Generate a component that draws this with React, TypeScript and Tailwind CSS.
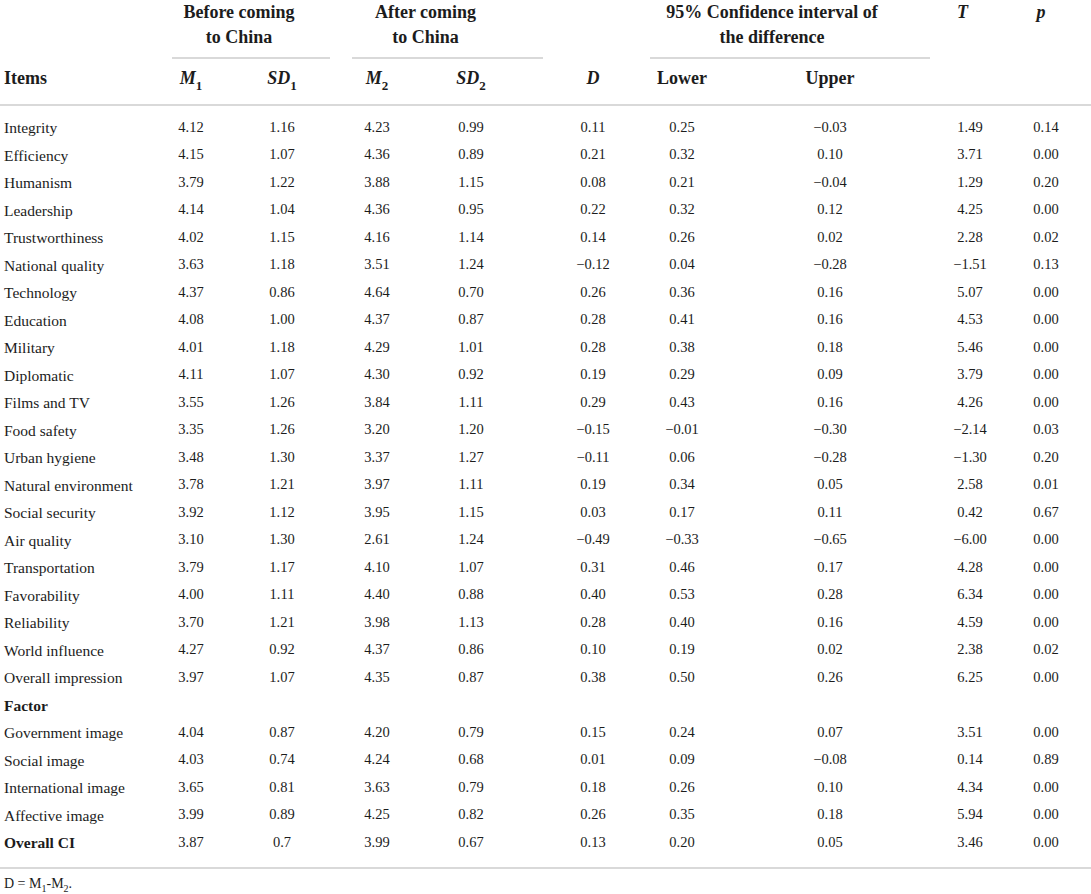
import React from 'react';

type Row = {
  item: string;
  values?: string[];
  bold?: boolean;
};

const rows: Row[] = [
  { item: 'Integrity', values: ['4.12', '1.16', '4.23', '0.99', '0.11', '0.25', '−0.03', '1.49', '0.14'] },
  { item: 'Efficiency', values: ['4.15', '1.07', '4.36', '0.89', '0.21', '0.32', '0.10', '3.71', '0.00'] },
  { item: 'Humanism', values: ['3.79', '1.22', '3.88', '1.15', '0.08', '0.21', '−0.04', '1.29', '0.20'] },
  { item: 'Leadership', values: ['4.14', '1.04', '4.36', '0.95', '0.22', '0.32', '0.12', '4.25', '0.00'] },
  { item: 'Trustworthiness', values: ['4.02', '1.15', '4.16', '1.14', '0.14', '0.26', '0.02', '2.28', '0.02'] },
  { item: 'National quality', values: ['3.63', '1.18', '3.51', '1.24', '−0.12', '0.04', '−0.28', '−1.51', '0.13'] },
  { item: 'Technology', values: ['4.37', '0.86', '4.64', '0.70', '0.26', '0.36', '0.16', '5.07', '0.00'] },
  { item: 'Education', values: ['4.08', '1.00', '4.37', '0.87', '0.28', '0.41', '0.16', '4.53', '0.00'] },
  { item: 'Military', values: ['4.01', '1.18', '4.29', '1.01', '0.28', '0.38', '0.18', '5.46', '0.00'] },
  { item: 'Diplomatic', values: ['4.11', '1.07', '4.30', '0.92', '0.19', '0.29', '0.09', '3.79', '0.00'] },
  { item: 'Films and TV', values: ['3.55', '1.26', '3.84', '1.11', '0.29', '0.43', '0.16', '4.26', '0.00'] },
  { item: 'Food safety', values: ['3.35', '1.26', '3.20', '1.20', '−0.15', '−0.01', '−0.30', '−2.14', '0.03'] },
  { item: 'Urban hygiene', values: ['3.48', '1.30', '3.37', '1.27', '−0.11', '0.06', '−0.28', '−1.30', '0.20'] },
  { item: 'Natural environment', values: ['3.78', '1.21', '3.97', '1.11', '0.19', '0.34', '0.05', '2.58', '0.01'] },
  { item: 'Social security', values: ['3.92', '1.12', '3.95', '1.15', '0.03', '0.17', '0.11', '0.42', '0.67'] },
  { item: 'Air quality', values: ['3.10', '1.30', '2.61', '1.24', '−0.49', '−0.33', '−0.65', '−6.00', '0.00'] },
  { item: 'Transportation', values: ['3.79', '1.17', '4.10', '1.07', '0.31', '0.46', '0.17', '4.28', '0.00'] },
  { item: 'Favorability', values: ['4.00', '1.11', '4.40', '0.88', '0.40', '0.53', '0.28', '6.34', '0.00'] },
  { item: 'Reliability', values: ['3.70', '1.21', '3.98', '1.13', '0.28', '0.40', '0.16', '4.59', '0.00'] },
  { item: 'World influence', values: ['4.27', '0.92', '4.37', '0.86', '0.10', '0.19', '0.02', '2.38', '0.02'] },
  { item: 'Overall impression', values: ['3.97', '1.07', '4.35', '0.87', '0.38', '0.50', '0.26', '6.25', '0.00'] },
  { item: 'Factor', bold: true },
  { item: 'Government image', values: ['4.04', '0.87', '4.20', '0.79', '0.15', '0.24', '0.07', '3.51', '0.00'] },
  { item: 'Social image', values: ['4.03', '0.74', '4.24', '0.68', '0.01', '0.09', '−0.08', '0.14', '0.89'] },
  { item: 'International image', values: ['3.65', '0.81', '3.63', '0.79', '0.18', '0.26', '0.10', '4.34', '0.00'] },
  { item: 'Affective image', values: ['3.99', '0.89', '4.25', '0.82', '0.26', '0.35', '0.18', '5.94', '0.00'] },
  { item: 'Overall CI', bold: true, values: ['3.87', '0.7', '3.99', '0.67', '0.13', '0.20', '0.05', '3.46', '0.00'] },
];

// column tracks, padding nudges each column onto its value centre
const cols = [
  'w-[150px] pl-[4px] text-left',
  'w-[87px] pr-[5px] text-center',
  'w-[93px] pr-[3px] text-center',
  'w-[94px] text-center',
  'w-[108px] pr-[14px] text-center',
  'w-[106px] pl-[16px] text-center',
  'w-[118px] pr-[30px] text-center',
  'w-[144px] pl-[4px] text-center',
  'w-[108px] pl-[32px] text-center',
  'w-[83px] pr-[7px] text-center',
];

function Sym({ base, sub }: { base: string; sub?: string }) {
  return (
    <span className="italic font-bold">
      {base}
      {sub && <sub className="not-italic font-semibold text-[13px] align-[-3px] leading-none">{sub}</sub>}
    </span>
  );
}

export default function App() {
  return (
    <div className="w-[1091px] h-[894px] bg-white text-[#1c1c1c] font-['Liberation_Serif',serif] overflow-hidden">
      {/* group headings */}
      <div className="flex text-[18px] font-bold leading-[25px]">
        <div className="ml-[172px] w-[158px] flex flex-col">
          <div className="pr-[24px] text-center">
            Before coming
            <br />
            to China
          </div>
          <div className="mt-[7px] h-[2px] bg-[#d9d9d9]" />
        </div>
        <div className="ml-[22px] w-[191px] flex flex-col">
          <div className="pr-[44px] text-center">
            After coming
            <br />
            to China
          </div>
          <div className="mt-[7px] h-[2px] bg-[#d9d9d9]" />
        </div>
        <div className="ml-[107px] w-[280px] flex flex-col">
          <div className="pr-[36px] text-center">
            95% Confidence interval of
            <br />
            the difference
          </div>
          <div className="mt-[7px] h-[2px] bg-[#d9d9d9]" />
        </div>
        <div className="w-[65px] text-center">
          <Sym base="T" />
        </div>
        <div className="w-[96px] pr-[4px] text-center">
          <Sym base="p" />
        </div>
      </div>

      {/* column headings */}
      <div className="flex h-[47px] pt-[7px] text-[18px] font-bold leading-[25px] border-b-2 border-[#d9d9d9]">
        <div className={cols[0]}>Items</div>
        <div className={cols[1]}>
          <Sym base="M" sub="1" />
        </div>
        <div className={cols[2]}>
          <Sym base="SD" sub="1" />
        </div>
        <div className={cols[3]}>
          <Sym base="M" sub="2" />
        </div>
        <div className={cols[4]}>
          <Sym base="SD" sub="2" />
        </div>
        <div className={cols[5]}>
          <Sym base="D" />
        </div>
        <div className={cols[6]}>Lower</div>
        <div className={cols[7]}>Upper</div>
        <div className={cols[8]} />
        <div className={cols[9]} />
      </div>

      {/* body */}
      <div className="pt-[8px] pb-[10px] border-b-2 border-[#d9d9d9] text-[14.5px]">
        {rows.map((row) => (
          <div key={row.item} className="flex h-[27.5px] items-center whitespace-nowrap">
            <div className={`${cols[0]} text-[15.5px] ${row.bold ? 'font-bold' : ''}`}>{row.item}</div>
            {row.values?.map((v, i) => (
              <div key={i} className={cols[i + 1]}>
                {v}
              </div>
            ))}
          </div>
        ))}
      </div>

      <div className="pl-[4px] pt-[7px] text-[14px] leading-[16px]">
        D = M<sub className="text-[10px] align-[-2px] leading-none">1</sub>-M
        <sub className="text-[10px] align-[-2px] leading-none">2</sub>.
      </div>
    </div>
  );
}
